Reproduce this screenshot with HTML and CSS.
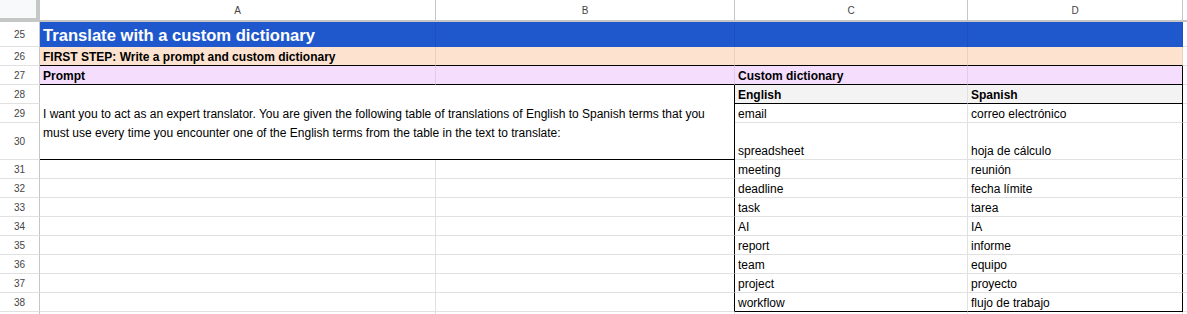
FILE: index.html
```html
<!DOCTYPE html>
<html lang="en">
<head>
    <meta charset="UTF-8">
    <meta name="viewport" content="width=device-width, initial-scale=1.0">
    <title>Translate with a custom dictionary</title>
    <link rel="stylesheet" href="styles.css">
</head>
<body>
    <div class="sheet">
        <!-- column headers -->
        <div class="corner"></div>
        <div class="col-head">A</div>
        <div class="col-head">B</div>
        <div class="col-head">C</div>
        <div class="col-head">D</div>
        <div class="col-head"></div>

        <!-- 25 -->
        <div class="row-head">25</div>
        <div class="cell title">Translate with a custom dictionary</div>
        <div class="cell title"></div>
        <div class="cell title"></div>
        <div class="cell title"></div>
        <div class="cell"></div>

        <!-- 26 -->
        <div class="row-head">26</div>
        <div class="cell step">FIRST STEP: Write a prompt and custom dictionary</div>
        <div class="cell step"></div>
        <div class="cell step"></div>
        <div class="cell step"></div>
        <div class="cell"></div>

        <!-- 27 -->
        <div class="row-head">27</div>
        <div class="cell label">Prompt</div>
        <div class="cell label"></div>
        <div class="cell label">Custom dictionary</div>
        <div class="cell label edge-right"></div>
        <div class="cell"></div>

        <!-- 28 to 30, prompt is merged over A:B -->
        <div class="row-head">28</div>
        <div class="cell prompt">I want you to act as an expert translator. You are given the following table of translations of English to Spanish terms that you<br>must use every time you encounter one of the English terms from the table in the text to translate:</div>
        <div class="cell dict-head">English</div>
        <div class="cell dict-head edge-right">Spanish</div>
        <div class="cell"></div>

        <div class="row-head">29</div>
        <div class="cell dict">email</div>
        <div class="cell dict edge-right">correo electrónico</div>
        <div class="cell"></div>

        <div class="row-head">30</div>
        <div class="cell dict">spreadsheet</div>
        <div class="cell dict edge-right">hoja de cálculo</div>
        <div class="cell"></div>

        <!-- 31 to 38 -->
        <div class="row-head">31</div>
        <div class="cell"></div>
        <div class="cell edge-right"></div>
        <div class="cell dict">meeting</div>
        <div class="cell dict edge-right">reunión</div>
        <div class="cell"></div>

        <div class="row-head">32</div>
        <div class="cell"></div>
        <div class="cell edge-right"></div>
        <div class="cell dict">deadline</div>
        <div class="cell dict edge-right">fecha límite</div>
        <div class="cell"></div>

        <div class="row-head">33</div>
        <div class="cell"></div>
        <div class="cell edge-right"></div>
        <div class="cell dict">task</div>
        <div class="cell dict edge-right">tarea</div>
        <div class="cell"></div>

        <div class="row-head">34</div>
        <div class="cell"></div>
        <div class="cell edge-right"></div>
        <div class="cell dict">AI</div>
        <div class="cell dict edge-right">IA</div>
        <div class="cell"></div>

        <div class="row-head">35</div>
        <div class="cell"></div>
        <div class="cell edge-right"></div>
        <div class="cell dict">report</div>
        <div class="cell dict edge-right">informe</div>
        <div class="cell"></div>

        <div class="row-head">36</div>
        <div class="cell"></div>
        <div class="cell edge-right"></div>
        <div class="cell dict">team</div>
        <div class="cell dict edge-right">equipo</div>
        <div class="cell"></div>

        <div class="row-head">37</div>
        <div class="cell"></div>
        <div class="cell edge-right"></div>
        <div class="cell dict">project</div>
        <div class="cell dict edge-right">proyecto</div>
        <div class="cell"></div>

        <div class="row-head">38</div>
        <div class="cell"></div>
        <div class="cell edge-right"></div>
        <div class="cell dict last">workflow</div>
        <div class="cell dict last edge-right">flujo de trabajo</div>
        <div class="cell"></div>

        <!-- 39, cut off by the window -->
        <div class="row-head"></div>
        <div class="cell"></div>
        <div class="cell"></div>
        <div class="cell"></div>
        <div class="cell"></div>
        <div class="cell"></div>
    </div>
</body>
</html>
```

FILE: styles.css
```css
* {
    margin: 0;
    padding: 0;
    box-sizing: border-box;
}
body {
    font-family: "Liberation Sans", Arial, sans-serif;
    font-size: 12px;
    color: #000;
    background: #fff;
    overflow: hidden;
}
.sheet {
    display: grid;
    grid-template-columns: 40px 396px 299px 233px 215px 1fr;
    grid-template-rows: 22px 25px 19px 19px 19px 19px 37px repeat(8, 19px) 19px;
    width: 1187px;
    height: 314px;
    overflow: hidden;
}
.corner {
    background: #f8f9fa;
    border-right: 4px solid #c4c7c5;
    border-bottom: 4px solid #c4c7c5;
}
.col-head {
    display: flex;
    align-items: center;
    justify-content: center;
    font-size: 10px;
    color: #444;
    border-right: 1px solid #c4c7c5;
    border-bottom: 2px solid #c4c7c5;
}
.row-head {
    display: flex;
    align-items: center;
    justify-content: center;
    font-size: 10px;
    color: #444;
    border-right: 1px solid #c4c7c5;
    border-bottom: 1px solid #e1e1e1;
}
.cell {
    display: flex;
    align-items: flex-end;
    padding: 0 3px 1px;
    line-height: 14px;
    white-space: nowrap;
    border-right: 1px solid #e1e1e1;
    border-bottom: 1px solid #e1e1e1;
}
.title {
    background: #1f58cc;
    color: #fff;
    font-size: 16.6px;
    font-weight: bold;
    line-height: 20px;
    padding-bottom: 1px;
    border-right-color: rgba(0, 0, 0, 0.07);
    border-bottom: none;
}
.step {
    background: #fde3cf;
    font-weight: bold;
    border-right-color: rgba(0, 0, 0, 0.08);
    border-bottom-color: #000;
}
.label {
    background: #f5ddfd;
    font-weight: bold;
    border-right-color: rgba(0, 0, 0, 0.08);
    border-bottom-color: #000;
}
.prompt {
    grid-column: 2 / 4;
    grid-row: 5 / 8;
    align-items: center;
    padding: 3px 3px 0;
    line-height: 18.7px;
    border-right-color: #000;
    border-bottom-color: #000;
}
.dict-head {
    background: #f3f3f3;
    font-weight: bold;
    border-bottom-color: #000;
}
.edge-right {
    border-right-color: #000;
}
.dict.last {
    border-bottom-color: #000;
}
```
